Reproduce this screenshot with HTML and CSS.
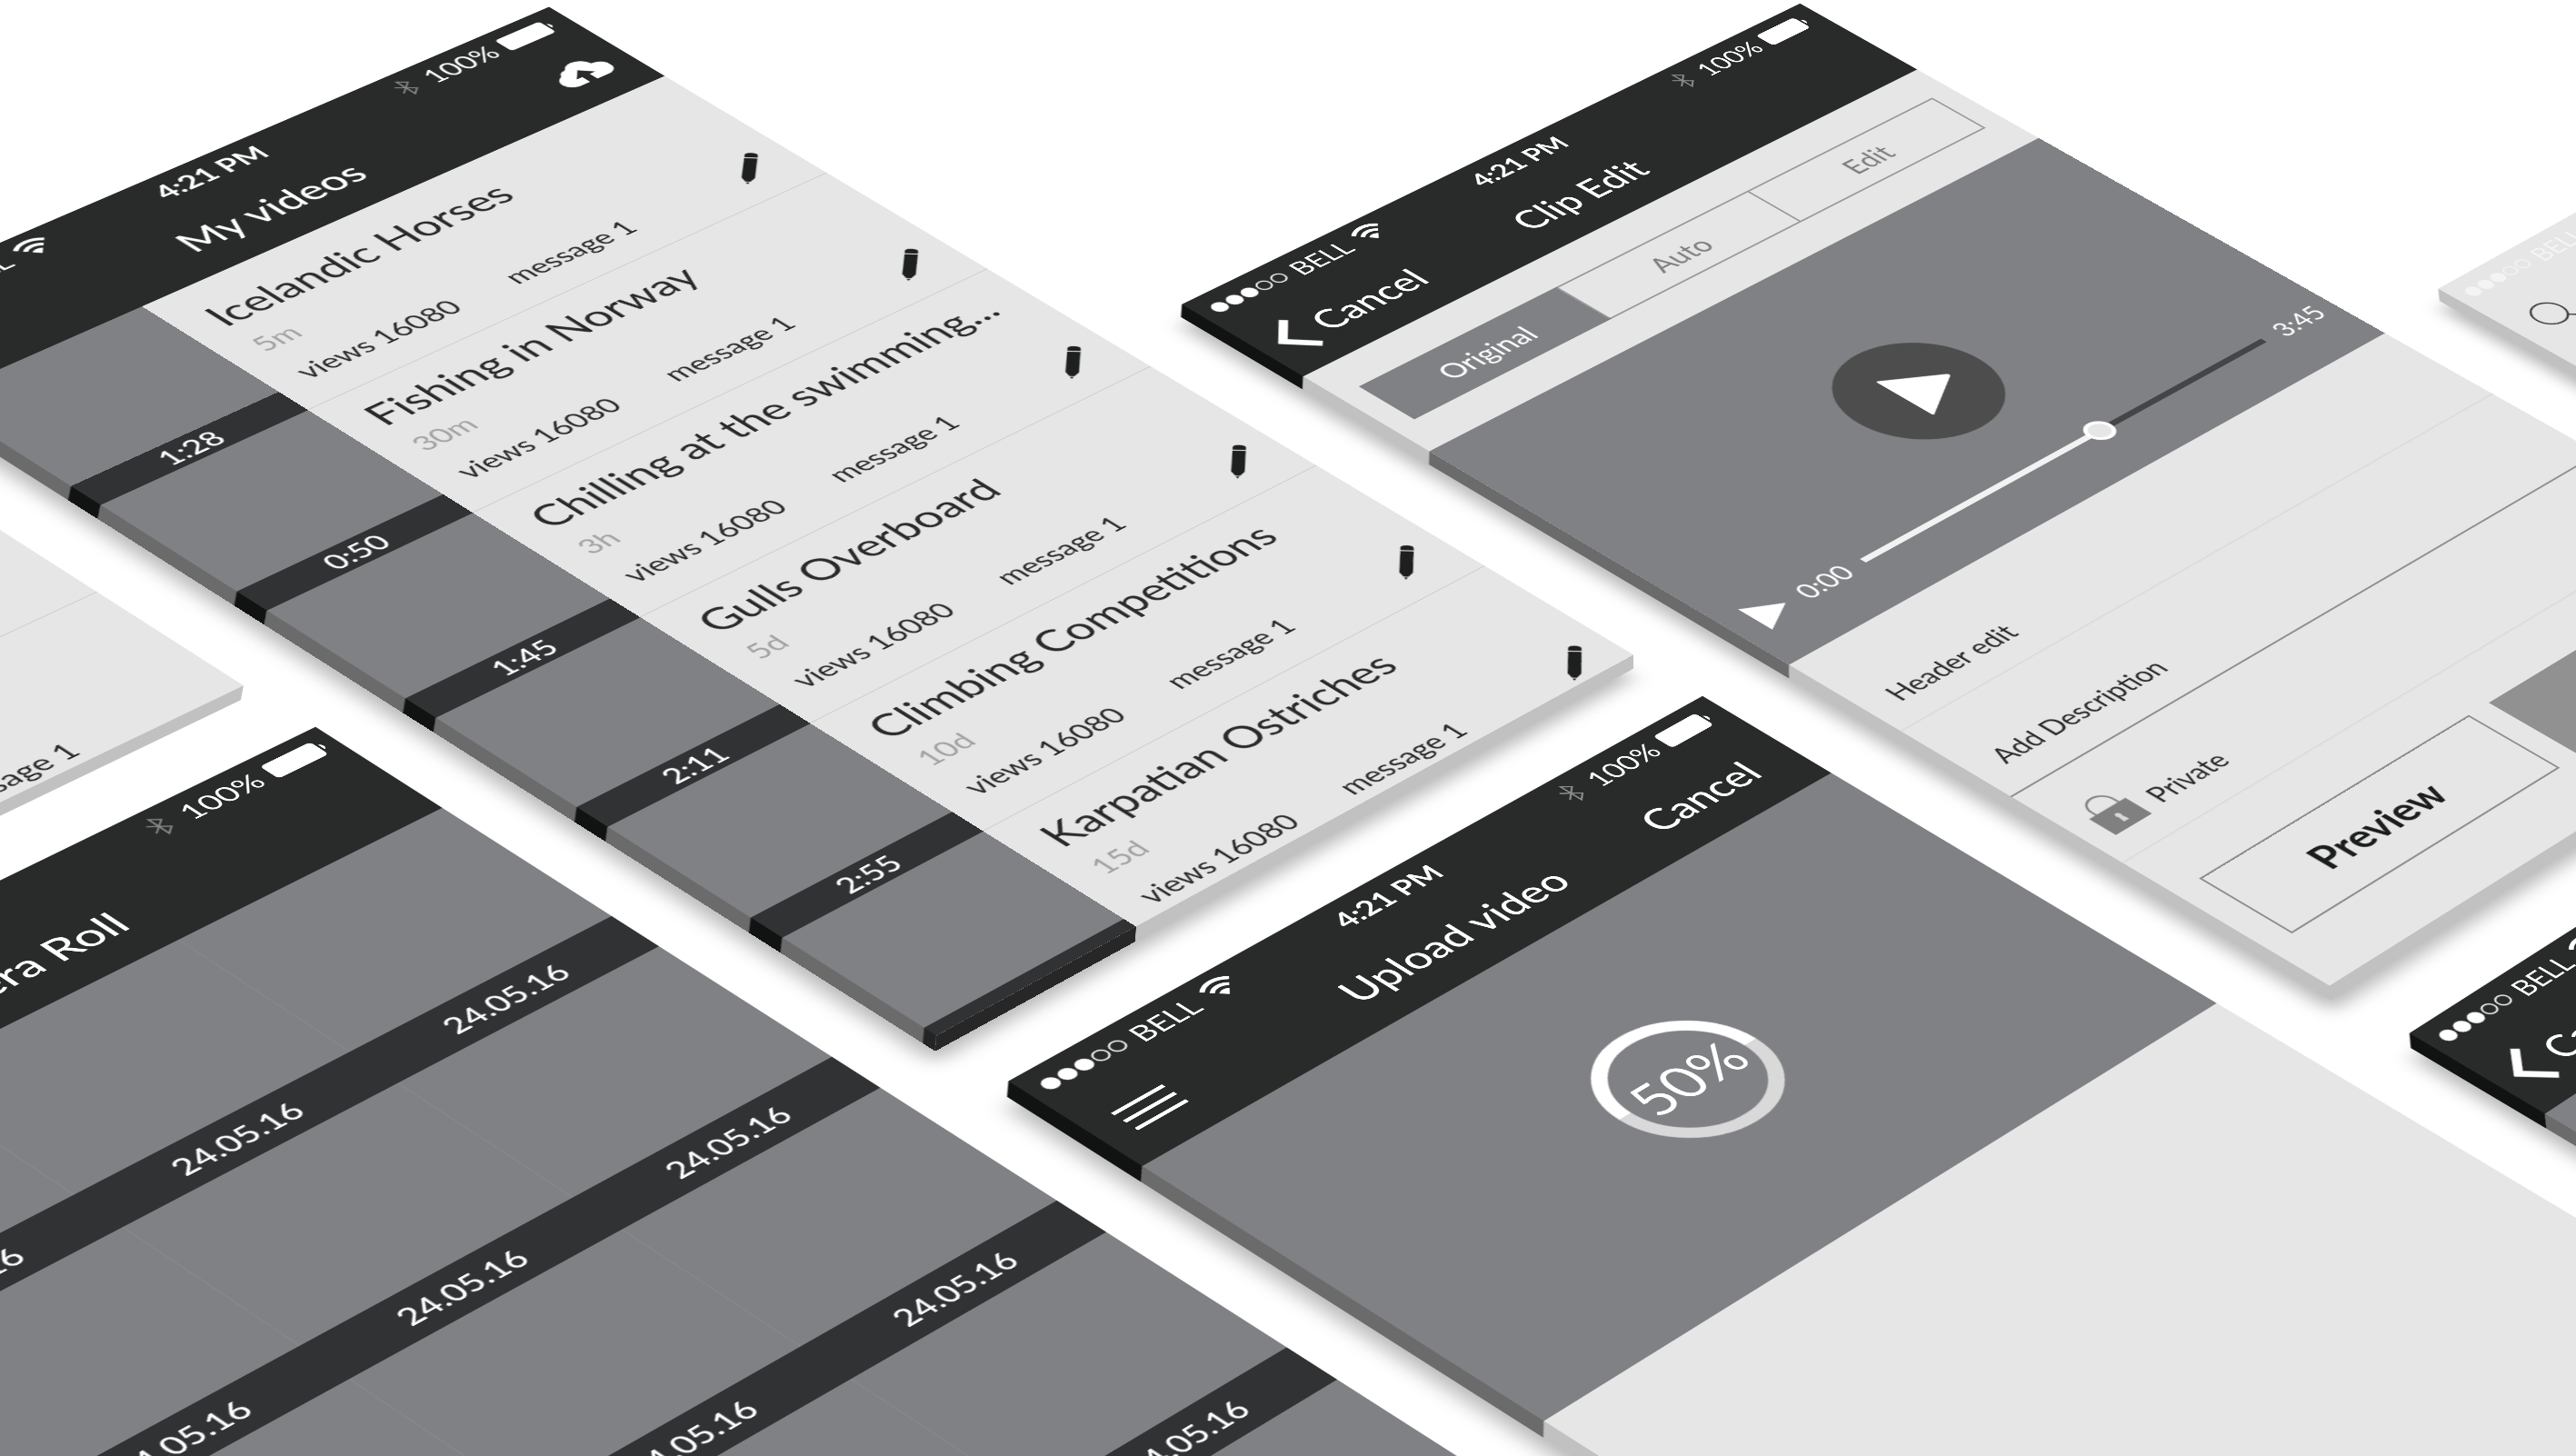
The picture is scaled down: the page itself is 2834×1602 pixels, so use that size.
FILE: index.html
```html
<!DOCTYPE html>
<html lang="en">
<head>
<meta charset="utf-8">
<title>Video app screens</title>
<link rel="stylesheet" href="styles.css">
</head>
<body>
<svg class="sprite" aria-hidden="true">
  <symbol id="dots" viewBox="0 0 88 18">
    <g fill="currentColor"><circle cx="9" cy="9" r="7.500"/><circle cx="26" cy="9" r="7.500"/><circle cx="43" cy="9" r="7.500"/></g>
    <g fill="none" stroke="currentColor" stroke-width="1.5"><circle cx="60" cy="9" r="6.500"/><circle cx="77" cy="9" r="6.500"/></g>
  </symbol>
  <symbol id="wifi" viewBox="0 0 28 22">
    <g fill="none" stroke="currentColor" stroke-width="3.4"><path d="M2 8.5a17 17 0 0 1 24 0"/><path d="M6.5 13.5a10.500 10.500 0 0 1 15 0"/></g>
    <path fill="currentColor" d="M14 22l-4.500-5a6.500 6.500 0 0 1 9 0z"/>
  </symbol>
  <symbol id="bluetooth" viewBox="0 0 18 28">
    <path d="M2 8l14 12-7 6V2l7 6L2 20" fill="none" stroke="currentColor" stroke-width="1.600"/>
  </symbol>
  <symbol id="battery" viewBox="0 0 54 22">
    <rect x="0" y="0" width="48" height="22" rx="4" fill="currentColor"/>
    <path d="M50 7a4.500 4.500 0 0 1 0 8z" fill="currentColor"/>
  </symbol>
  <symbol id="pencil" viewBox="0 0 60 60">
    <g transform="rotate(45 30 30)" fill="currentColor">
      <path d="M24.500 9q0-4 5.500-4t5.500 4v3h-11zM24.500 13.500h11v31l-3.500 6h-4l-3.500-6zM28.500 51.500h3L30 55z"/>
    </g>
  </symbol>
  <symbol id="chevron" viewBox="0 0 36 56">
    <path d="M31 4L8 28l23 24" fill="none" stroke="currentColor" stroke-width="8"/>
  </symbol>
</svg>

<main class="scene">
  <div class="board">

    <div class="column column-1">
      <section class="phone flat" aria-label="Video list">
        <div class="list-tail">
          <div class="tail-row"></div>
          <div class="tail-row"><span>message 1</span></div>
        </div>
      </section>

      <section class="phone flat camera">
        <header class="bar">
          <div class="status"><span class="carrier"></span><span class="clock">4:21 PM</span>
            <span class="power"><svg class="i-bt"><use href="#bluetooth"/></svg>100%<svg class="i-batt"><use href="#battery"/></svg></span></div>
          <div class="nav"><span></span><h2>Camera Roll</h2><span></span></div>
        </header>
        <div class="roll">
          <figure><figcaption>24.05.16</figcaption></figure><figure><figcaption>24.05.16</figcaption></figure><figure><figcaption>24.05.16</figcaption></figure>
          <figure><figcaption>24.05.16</figcaption></figure><figure><figcaption>24.05.16</figcaption></figure><figure><figcaption>24.05.16</figcaption></figure>
          <figure><figcaption>24.05.16</figcaption></figure><figure><figcaption>24.05.16</figcaption></figure><figure><figcaption>24.05.16</figcaption></figure>
          <figure><figcaption>24.05.16</figcaption></figure><figure><figcaption>24.05.16</figcaption></figure><figure><figcaption>24.05.16</figcaption></figure>
        </div>
      </section>
    </div>

    <div class="column column-2">
      <section class="phone split">
        <header class="bar">
          <div class="status"><span class="carrier"><svg class="i-dots"><use href="#dots"/></svg>BELL<svg class="i-wifi"><use href="#wifi"/></svg></span><span class="clock">4:21 PM</span>
            <span class="power"><svg class="i-bt"><use href="#bluetooth"/></svg>100%<svg class="i-batt"><use href="#battery"/></svg></span></div>
          <div class="nav"><span></span><h2>My videos</h2>
            <button class="nav-btn upload" aria-label="Upload"><svg class="i-cloud" viewBox="0 0 54 38"><path fill="currentColor" d="M12 36a11 11 0 0 1-2-21.500 9 9 0 0 1 9-6A13 13 0 0 1 43 14a11 11 0 0 1 1 22H31V26h6L27 15 17 26h6v10z"/></svg></button></div>
        </header>
        <ul class="videos">
          <li><div class="thumb"><time>1:28</time></div><div class="info"><h3>Icelandic Horses</h3><p class="age">5m</p><p class="meta"><span>views 16080</span><span>message 1</span></p></div><button class="edit" aria-label="Edit Icelandic Horses"><svg><use href="#pencil"/></svg></button></li>
          <li><div class="thumb"><time>0:50</time></div><div class="info"><h3>Fishing in Norway</h3><p class="age">30m</p><p class="meta"><span>views 16080</span><span>message 1</span></p></div><button class="edit" aria-label="Edit Fishing in Norway"><svg><use href="#pencil"/></svg></button></li>
          <li><div class="thumb"><time>1:45</time></div><div class="info"><h3>Chilling at the swimming...</h3><p class="age">3h</p><p class="meta"><span>views 16080</span><span>message 1</span></p></div><button class="edit" aria-label="Edit Chilling at the swimming"><svg><use href="#pencil"/></svg></button></li>
          <li><div class="thumb"><time>2:11</time></div><div class="info"><h3>Gulls Overboard</h3><p class="age">5d</p><p class="meta"><span>views 16080</span><span>message 1</span></p></div><button class="edit" aria-label="Edit Gulls Overboard"><svg><use href="#pencil"/></svg></button></li>
          <li><div class="thumb"><time>2:55</time></div><div class="info"><h3>Climbing Competitions</h3><p class="age">10d</p><p class="meta"><span>views 16080</span><span>message 1</span></p></div><button class="edit" aria-label="Edit Climbing Competitions"><svg><use href="#pencil"/></svg></button></li>
          <li class="last"><div class="thumb"><span class="sliver"></span></div><div class="info"><h3>Karpatian Ostriches</h3><p class="age">15d</p><p class="meta"><span>views 16080</span><span>message 1</span></p></div><button class="edit" aria-label="Edit Karpatian Ostriches"><svg><use href="#pencil"/></svg></button></li>
        </ul>
      </section>

      <section class="phone">
        <header class="bar">
          <div class="status"><span class="carrier"><svg class="i-dots"><use href="#dots"/></svg>BELL<svg class="i-wifi"><use href="#wifi"/></svg></span><span class="clock">4:21 PM</span>
            <span class="power"><svg class="i-bt"><use href="#bluetooth"/></svg>100%<svg class="i-batt"><use href="#battery"/></svg></span></div>
          <div class="nav"><button class="nav-btn menu" aria-label="Menu"><i></i><i></i><i></i></button><h2>Upload video</h2><button class="nav-btn right">Cancel</button></div>
        </header>
        <div class="progress">
          <div class="ring"><svg viewBox="0 0 152 152"><path class="done" d="M7 76a69 69 0 0 1 138 0"/><path class="todo" d="M145 76a69 69 0 0 1-138 0"/></svg><span>50%</span></div>
        </div>
        <div class="sheet"></div>
      </section>
    </div>

    <div class="column column-3">
      <section class="phone">
        <header class="bar">
          <div class="status"><span class="carrier"><svg class="i-dots"><use href="#dots"/></svg>BELL<svg class="i-wifi"><use href="#wifi"/></svg></span><span class="clock">4:21 PM</span>
            <span class="power"><svg class="i-bt"><use href="#bluetooth"/></svg>100%<svg class="i-batt"><use href="#battery"/></svg></span></div>
          <div class="nav"><button class="nav-btn back"><svg class="i-chev"><use href="#chevron"/></svg>Cancel</button><h2>Clip Edit</h2><span></span></div>
        </header>
        <div class="modes">
          <div class="segmented"><button class="on">Original</button><button>Auto</button><button>Edit</button></div>
        </div>
        <div class="player">
          <button class="play" aria-label="Play"><svg viewBox="0 0 150 150"><path d="M59 41q-2-1-2 2v64q0 3 2 2l53-32q2-2 0-4z"/></svg></button>
          <div class="controls">
            <button class="mini" aria-label="Play"><svg viewBox="0 0 38 44"><path d="M0 2v40l36-20z"/></svg></button>
            <span class="from">0:00</span>
            <input type="range" min="0" max="1000" value="585" aria-label="Position">
            <span>3:45</span>
          </div>
        </div>
        <form class="fields">
          <input type="text" placeholder="Header edit" aria-label="Header edit">
          <input class="strong" type="text" placeholder="Add Description" aria-label="Add Description">
          <div class="private"><svg class="i-lock" viewBox="0 0 42 50"><path d="M8 22V16a13 13 0 0 1 26 0v6" fill="none" stroke="#808080" stroke-width="2"/><rect y="21" width="42" height="29" fill="#808080"/><path d="M21 30a3 3 0 0 1 2 5l1 7h-6l1-7a3 3 0 0 1 2-5z" fill="#d8d8d8"/></svg>Private</div>
          <div class="actions"><button type="button" class="outline">Preview</button><button type="button" class="solid" aria-label="Save"></button></div>
        </form>
      </section>

      <section class="phone">
        <header class="bar">
          <div class="status"><span class="carrier"><svg class="i-dots"><use href="#dots"/></svg>BELL<svg class="i-wifi"><use href="#wifi"/></svg></span><span class="clock"></span><span></span></div>
          <div class="nav"><button class="nav-btn back"><svg class="i-chev"><use href="#chevron"/></svg>Cancel</button><span></span><span></span></div>
        </header>
        <div class="progress tall"></div>
      </section>
    </div>

    <div class="column column-4">
      <section class="phone">
        <header class="bar pale">
          <div class="status"><span class="carrier"><svg class="i-dots"><use href="#dots"/></svg>BELL<svg class="i-wifi"><use href="#wifi"/></svg></span><span></span><span></span></div>
          <div class="nav"><button class="nav-btn find" aria-label="Search"><svg class="i-find" viewBox="0 0 48 48"><circle cx="20" cy="20" r="17"/><path d="M32 32l12 12"/></svg></button><span></span><span></span></div>
        </header>
        <div class="sheet"></div>
      </section>
    </div>

  </div>
</main>
</body>
</html>
```
FILE: styles.css
```css
:root {
  --ink: #292b2a;
  --grey: #808184;
  --strip: #313234;
  --light: #e6e6e6;
  --depth: 14px;
}

* { box-sizing: border-box; }

body {
  margin: 0;
  background: #fff;
  color: var(--ink);
  font-family: Lato, "Liberation Sans", sans-serif;
  font-size: 28px;
  line-height: 32px;
}

h2, h3, p, ul, figure { margin: 0; padding: 0; font-weight: 400; }
ul { list-style: none; }
button {
  padding: 0;
  border: 0;
  background: none;
  color: inherit;
  font: inherit;
}
svg { display: block; flex: none; }
.sprite { position: absolute; width: 0; height: 0; }

.scene {
  position: relative;
  height: 100vh;
  overflow: hidden;
}

/* All screens lie on one plane seen in perspective. */
.board {
  position: absolute;
  top: 0;
  left: 0;
  display: flex;
  align-items: flex-start;
  width: max-content;
  transform-origin: 0 0;
  transform:
    matrix3d(1.06116, -0.43286, 0, 0.0000864,
             0.83273, 0.51064, 0, -0.00003703,
             0, 0, 1, 0,
             602, 8.4, 0, 1)
    translate(-1576px, -706px);
}

.column { display: flex; flex-direction: column; gap: 80px; width: 750px; }
.column-2 { margin: 706px 0 0 78px; }
.column-3 { margin: 1406px 0 0 84px; gap: 88px; }
.column-4 { margin: 2114px 0 0 90px; }

.phone {
  position: relative;
  display: flex;
  flex-direction: column;
  height: 1327px;
  background: var(--light);
  box-shadow: -24px 24px 18px rgba(0, 0, 0, .28);
}
.column-3 .phone { height: 1336px; }
.phone.flat { box-shadow: none; }

/* Slab thickness: left face per section, bottom face per phone. */
.bar, .progress, .sheet, .modes, .player, .fields, .thumb, .thumb time, .sliver { position: relative; }
.bar::before, .progress::before, .sheet::before, .modes::before, .player::before, .fields::before,
.thumb::before, .thumb time::before, .sliver::before {
  content: "";
  position: absolute;
  top: 0;
  bottom: 0;
  right: 100%;
  width: var(--depth);
  background: var(--side);
  transform: skewY(-45deg);
  transform-origin: right;
}
.phone::after {
  content: "";
  position: absolute;
  top: 100%;
  left: 0;
  right: 0;
  height: var(--depth);
  background: #c1c1c1;
  transform: skewX(-45deg);
  transform-origin: top;
}
.phone.split::after { background: linear-gradient(90deg, #272727 204px, #c1c1c1 204px); }

.bar { --side: #111312; height: 148px; background: var(--ink); color: #fff; }
.bar.pale { --side: #c1c1c1; background: var(--light); color: #f4f4f4; }
.sheet, .modes, .fields { --side: #c1c1c1; }
.progress, .player, .thumb { --side: #6b6b6b; }

.status, .nav { display: grid; grid-template-columns: 1fr auto 1fr; align-items: center; }
.status { height: 48px; padding: 0 16px 0 12px; }
.carrier, .power { display: flex; align-items: center; }
.power { justify-content: flex-end; }
.clock { font-weight: 700; }
.i-dots { width: 88px; height: 18px; margin-right: 6px; }
.i-wifi { width: 34px; height: 26px; margin: 0 0 6px 10px; }
.i-bt { width: 18px; height: 28px; margin-right: 14px; color: #8a8a8a; }
.i-batt { width: 54px; height: 22px; margin-left: 10px; }

.nav { height: 100px; font-size: 40px; font-weight: 500; line-height: 48px; }
.nav h2 { font-size: 40px; font-weight: 500; }
.nav-btn { justify-self: start; display: flex; align-items: center; }
.upload, .right { justify-self: end; }
.upload { margin-right: 22px; color: #fff; }
.right { margin-right: 42px; }
.i-cloud { width: 54px; height: 38px; }
.menu { flex-direction: column; gap: 9px; margin-left: 28px; }
.menu i { width: 52px; height: 4px; background: #fff; }
.i-chev { width: 36px; height: 56px; }
.back { gap: 12px; margin-left: 16px; }
.find { margin-left: 26px; color: #3c3c3c; }
.i-find { width: 48px; height: 48px; fill: none; stroke: currentColor; stroke-width: 2; }

/* My videos */
.videos li {
  display: flex;
  height: 200px;
  border-bottom: 1px solid #cdcdcd;
}
.videos li:first-child { height: 205px; }
.videos li:first-child .info { padding-top: 28px; }
.videos .last { height: 174px; border: 0; }
.thumb {
  flex: none;
  display: flex;
  flex-direction: column;
  justify-content: flex-end;
  width: 204px;
  margin-bottom: -1px;
  background: var(--grey);
}
.thumb time {
  --side: #111312;
  background: var(--strip);
  color: #fff;
  font-weight: 500;
  line-height: 36px;
  text-align: center;
}
.last .thumb { margin: 0; }
.sliver { --side: #232424; height: 14px; background: var(--strip); }
.info { flex: 1; min-width: 0; padding: 19px 0 0 29px; }
.info h3 { font-size: 42px; line-height: 48px; white-space: nowrap; }
.age { margin-top: 14px; color: #a2a2a2; }
.meta { display: flex; margin-top: 22px; }
.meta span:first-child { width: 214px; }
.edit { align-self: flex-end; margin: 0 14px 16px 0; color: #1e1f1f; }
.last .edit { margin-bottom: -6px; }
.edit svg { width: 60px; height: 60px; }

.list-tail { margin-top: 952px; }
.tail-row { height: 201px; border-bottom: 1px solid #cdcdcd; }
.tail-row:last-child { height: 174px; border: 0; padding: 137px 0 0 477px; }

/* Camera roll */
.camera { margin-left: 4px; margin-right: -4px; }
.camera .status { padding-right: 10px; }
.camera .nav { padding-left: 12px; }
.roll {
  flex: 1;
  display: grid;
  grid-template-columns: repeat(3, 1fr);
  grid-auto-rows: 249px;
  background: var(--grey);
}
.roll figure {
  display: flex;
  flex-direction: column;
  justify-content: flex-end;
  box-shadow: 1px 0 rgba(255, 255, 255, .06);
}
.roll figure:nth-child(3n) { box-shadow: none; }
.roll figcaption {
  background: var(--strip);
  color: #fff;
  font-weight: 500;
  line-height: 54px;
  text-align: center;
}

/* Upload */
.progress {
  display: flex;
  justify-content: center;
  align-items: center;
  height: 433px;
  padding-bottom: 14px;
  background: var(--grey);
}
.progress.tall { flex: 1; }
.sheet { flex: 1; }
.ring { display: grid; place-items: center; color: #fff; font-size: 54px; }
.ring > * { grid-area: 1 / 1; }
.ring svg { width: 152px; height: 152px; fill: none; stroke-width: 13; }
.done { stroke: #fff; }
.todo { stroke: #d9d9d9; }

/* Clip edit */
.modes { padding: 42px 24px 43px; }
.segmented { display: flex; height: 67px; border: 2px solid #9a9a9a; }
.segmented button { flex: 1; color: #7c7c7e; font-size: 30px; }
.segmented button + button { border-left: 2px solid #9a9a9a; }
.segmented .on { margin: -2px; background: var(--grey); color: #fff; }
.player { display: grid; height: 424px; background: var(--grey); }
.player > * { grid-area: 1 / 1; }
.play {
  place-self: center;
  width: 150px;
  height: 150px;
  border-radius: 50%;
  background: #4d4d4e;
}
.play path, .mini path { fill: #fff; }
.controls {
  align-self: end;
  display: flex;
  align-items: center;
  height: 130px;
  padding: 0 16px 0 26px;
  color: #fff;
}
.mini svg { width: 38px; height: 44px; }
.from { margin-left: 16px; }
.controls input {
  appearance: none;
  flex: 1;
  min-width: 0;
  height: 30px;
  margin: 0 18px;
  background: linear-gradient(90deg, #f2f2f2 58%, #444546 58%) center / 100% 7px no-repeat;
}
.controls input::-webkit-slider-thumb {
  appearance: none;
  width: 29px;
  height: 29px;
  border: 4px solid #fff;
  border-radius: 50%;
  background: #e6e6e6;
}
.fields { flex: 1; }
.fields > input, .private {
  display: flex;
  align-items: center;
  width: 100%;
  height: 126px;
  padding: 36px 30px 0;
  border: 0;
  border-bottom: 2px solid #dcdcdc;
  background: none;
  color: inherit;
  font: inherit;
}
.fields > input:first-child { height: 130px; padding-top: 50px; }
.fields > input::placeholder { color: inherit; opacity: 1; }
.fields > .strong { border-color: #8f8f8f; }
.private { padding-left: 24px; gap: 16px; }
.i-lock { width: 44px; height: 52px; margin-bottom: 22px; }
.actions { display: grid; grid-template-columns: 338px 1fr; gap: 26px; padding: 57px 30px 0; }
.actions button {
  height: 104px;
  border: 2px solid #8f8f8f;
  color: #1c1d1d;
  font-size: 42px;
  font-weight: 700;
}
.actions .outline { padding-right: 12px; }
.actions .solid { border: 0; background: #919191; }
```
